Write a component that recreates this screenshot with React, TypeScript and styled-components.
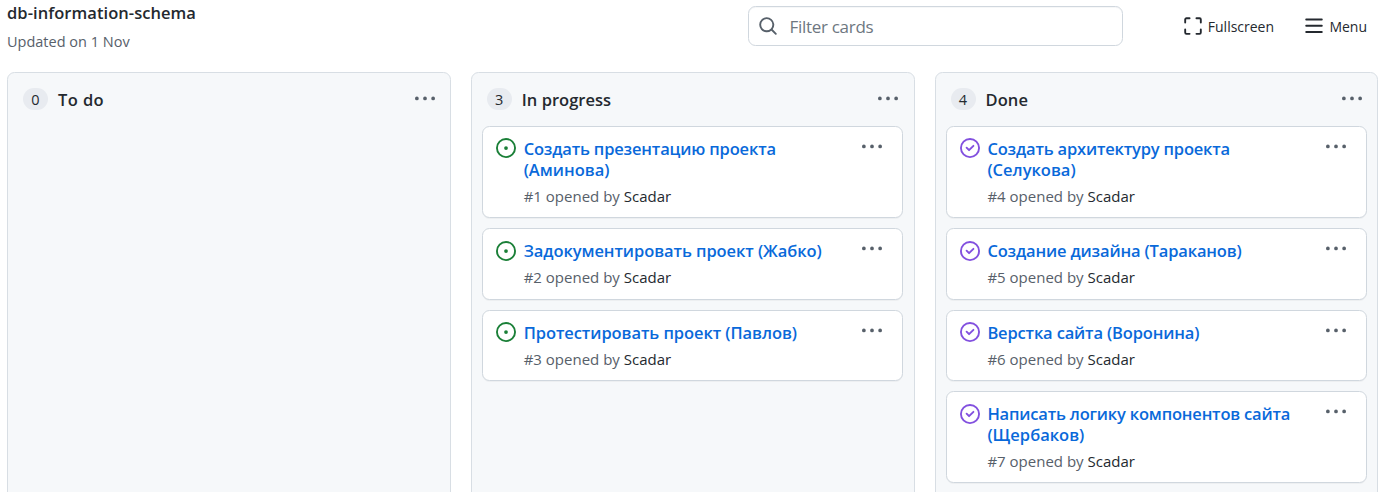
import React from 'react';
import styled, { createGlobalStyle } from 'styled-components';

const GlobalStyle = createGlobalStyle`
  * { box-sizing: border-box; }
  body { margin: 0; background: #fff; color: #24292f; font-family: "Open Sans", "Noto Sans", sans-serif; overflow: hidden; }
`;

const Page = styled.div`
  width: 1387px;
  height: 492px;
  overflow: hidden;
  display: flex;
  flex-direction: column;
`;

const Header = styled.header`
  height: 72px;
  flex: none;
  display: flex;
  align-items: flex-start;
  padding: 0 20px 0 7px;
`;

const TitleBlock = styled.div`
  width: 741px;
  display: flex;
  flex-direction: column;
`;

const Fit = styled.span<{ $ls?: number }>`
  letter-spacing: ${(p) => p.$ls ?? 0}px;
  white-space: nowrap;
`;

const ProjectName = styled.h1`
  margin: 1px 0 0;
  font-size: 16.5px;
  line-height: 24px;
  font-weight: 600;
`;

const Updated = styled.p`
  margin: 6px 0 0;
  font-size: 14.5px;
  line-height: 22px;
  color: #57606a;
`;

const Filter = styled.div`
  width: 375px;
  height: 40px;
  margin-top: 6px;
  border: 1px solid #d0d7de;
  border-radius: 7.5px;
  box-shadow: inset 0 1px 0 rgba(208, 215, 222, 0.2);
  display: flex;
  align-items: center;
  padding-left: 9px;
  gap: 11.4px;
  color: #57606a;
`;

const FilterText = styled.span`
  padding-top: 2px;
  font-size: 17px;
  line-height: 24px;
  color: #6e7781;
`;

const Actions = styled.nav`
  margin-left: auto;
  height: 52px;
  display: flex;
  align-items: center;
  gap: 30.3px;
`;

const Action = styled.a`
  display: flex;
  align-items: center;
  gap: 5px;
  font-size: 14px;
`;

const Board = styled.main`
  flex: 1;
  display: flex;
  gap: 20px;
  padding-left: 7px;
`;

const Column = styled.section`
  width: 443.75px;
  height: 440px;
  flex: none;
  border: 1px solid #d8dee4;
  border-radius: 7.5px;
  background: #f6f8fa;
  padding: 0 10.3px 0 10px;
`;

const ColumnHead = styled.div`
  height: 53px;
  display: flex;
  align-items: center;
  padding: 0 4.8px 0 5px;
`;

const Count = styled.span`
  width: 25px;
  height: 22px;
  border-radius: 11px;
  background: #e8ebf0;
  font-size: 14.5px;
  line-height: 23px;
  text-align: center;
  margin: 0 10px 1px 0;
`;

const ColumnTitle = styled.h2`
  margin: 0;
  flex: 1;
  font-size: 16.5px;
  line-height: 24px;
  font-weight: 600;
`;

const Cards = styled.div`
  display: flex;
  flex-direction: column;
  gap: 10px;
`;

const Card = styled.article`
  border: 1px solid #d0d7de;
  border-radius: 7.5px;
  background: #fff;
  box-shadow: 0 1px 0 rgba(27, 31, 36, 0.04);
  display: flex;
  align-items: flex-start;
  padding: 11.3px 20.3px 9.4px 13px;
`;

const CardBody = styled.div`
  flex: 1;
  margin: 0.7px 0 0 7.9px;
`;

const CardTitle = styled.h3`
  margin: 0;
  font-size: 16.5px;
  line-height: 20.8px;
  font-weight: 600;
  color: #0969da;
  span { display: block; width: max-content; }
`;

const Meta = styled.p`
  margin: 3.3px 0 0;
  font-size: 15px;
  line-height: 24px;
  color: #57606a;
  b { font-weight: 400; color: #24292f; }
`;

const Icon = styled.svg`
  display: block;
  flex: none;
  width: 20px;
  height: 20px;
`;

const MoreIcon = styled(Icon)<{ $lift: number }>`
  margin-top: ${(p) => -p.$lift}px;
`;

const Dots = ({ lift }: { lift: number }) => (
  <MoreIcon $lift={lift} viewBox="0 0 16 16" fill="#57606a">
    <path d="M8 9a1.5 1.5 0 1 0 0-3 1.5 1.5 0 0 0 0 3ZM1.5 9a1.5 1.5 0 1 0 0-3 1.5 1.5 0 0 0 0 3Zm13 0a1.5 1.5 0 1 0 0-3 1.5 1.5 0 0 0 0 3Z" />
  </MoreIcon>
);

const OpenIcon = () => (
  <Icon viewBox="0 0 16 16" fill="#1a7f37">
    <path d="M8 9.5a1.5 1.5 0 1 0 0-3 1.5 1.5 0 0 0 0 3Z" />
    <path d="M8 0a8 8 0 1 1 0 16A8 8 0 0 1 8 0ZM1.5 8a6.5 6.5 0 1 0 13 0 6.5 6.5 0 0 0-13 0Z" />
  </Icon>
);

const ClosedIcon = () => (
  <Icon viewBox="0 0 16 16" fill="#8250df">
    <path d="M11.28 6.78a.75.75 0 0 0-1.06-1.06L7.25 8.69 5.78 7.22a.75.75 0 0 0-1.06 1.06l2 2a.75.75 0 0 0 1.06 0l3.5-3.5Z" />
    <path d="M16 8A8 8 0 1 1 0 8a8 8 0 0 1 16 0Zm-1.5 0a6.5 6.5 0 1 0-13 0 6.5 6.5 0 0 0 13 0Z" />
  </Icon>
);

// A line of text with its letter spacing in pixels.
type Line = [string, number];
type Item = { id: number; lines: Line[]; done?: boolean };

const columns: { title: Line; items: Item[] }[] = [
  { title: ['To do', 0.4], items: [] },
  {
    title: ['In progress', 0.03],
    items: [
      { id: 1, lines: [['Создать презентацию проекта', -0.17], ['(Аминова)', 0]] },
      { id: 2, lines: [['Задокументировать проект (Жабко)', -0.07]] },
      { id: 3, lines: [['Протестировать проект (Павлов)', -0.07]] },
    ],
  },
  {
    title: ['Done', 0.1],
    items: [
      { id: 4, done: true, lines: [['Создать архитектуру проекта', -0.18], ['(Селукова)', 0]] },
      { id: 5, done: true, lines: [['Создание дизайна (Тараканов)', -0.16]] },
      { id: 6, done: true, lines: [['Верстка сайта (Воронина)', -0.16]] },
      { id: 7, done: true, lines: [['Написать логику компонентов сайта', -0.19], ['(Щербаков)', 0]] },
    ],
  },
];

export default function App() {
  return (
    <Page>
      <GlobalStyle />
      <Header>
        <TitleBlock>
          <ProjectName><Fit $ls={0.05}>db-information-schema</Fit></ProjectName>
          <Updated><Fit>Updated on 1 Nov</Fit></Updated>
        </TitleBlock>
        <Filter>
          <Icon viewBox="0 0 16 16" fill="currentColor">
            <path d="M10.68 11.74a6 6 0 0 1-7.922-8.982 6 6 0 0 1 8.982 7.922l3.04 3.04a.749.749 0 0 1-.326 1.275.749.749 0 0 1-.734-.215ZM11.5 7a4.499 4.499 0 1 0-8.997 0A4.499 4.499 0 0 0 11.5 7Z" />
          </Icon>
          <FilterText><Fit $ls={-0.28}>Filter cards</Fit></FilterText>
        </Filter>
        <Actions>
          <Action>
            <Icon viewBox="0 0 16 16" fill="none" stroke="#24292f" strokeWidth="1.5" strokeLinecap="round">
              <path d="M1.75 5.25v-2.5a1 1 0 0 1 1-1h2.5M10.75 1.75h2.5a1 1 0 0 1 1 1v2.5M14.25 10.75v2.5a1 1 0 0 1-1 1h-2.5M5.25 14.25h-2.5a1 1 0 0 1-1-1v-2.5" />
            </Icon>
            <Fit>Fullscreen</Fit>
          </Action>
          <Action>
            <Icon viewBox="0 0 16 16" fill="none" stroke="#24292f" strokeWidth="1.5" strokeLinecap="round">
              <path d="M1.75 2.75h12.5M1.75 7.75h12.5M1.75 12.75h12.5" />
            </Icon>
            <Fit>Menu</Fit>
          </Action>
        </Actions>
      </Header>
      <Board>
        {columns.map((c) => (
          <Column key={c.title[0]}>
            <ColumnHead>
              <Count>{c.items.length}</Count>
              <ColumnTitle><Fit $ls={c.title[1]}>{c.title[0]}</Fit></ColumnTitle>
              <Dots lift={2} />
            </ColumnHead>
            <Cards>
              {c.items.map((it) => (
                <Card key={it.id}>
                  {it.done ? <ClosedIcon /> : <OpenIcon />}
                  <CardBody>
                    <CardTitle>
                      {it.lines.map(([t, ls]) => <Fit key={t} $ls={ls}>{t}</Fit>)}
                    </CardTitle>
                    <Meta><Fit>#{it.id} opened by <b>Scadar</b></Fit></Meta>
                  </CardBody>
                  <Dots lift={1.3} />
                </Card>
              ))}
            </Cards>
          </Column>
        ))}
      </Board>
    </Page>
  );
}
